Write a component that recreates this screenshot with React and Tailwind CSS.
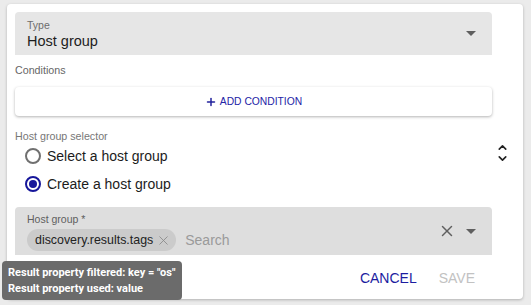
import { ChevronUp, ChevronDown, X, Plus } from 'lucide-react';

function Caret() {
  return (
    <svg width="10" height="5" viewBox="0 0 10 5" className="shrink-0">
      <path d="M0 0 L10 0 L5 5 Z" fill="#5f5f5f" />
    </svg>
  );
}

function Radio({ checked, label }) {
  return (
    <div className="flex items-center h-[28px]">
      <div className="ml-[10px] mr-[6px]">
        {checked ? (
          <div className="w-[16px] h-[16px] rounded-full border-2 border-[#16169a] flex items-center justify-center">
            <div className="w-[8px] h-[8px] rounded-full bg-[#16169a]" />
          </div>
        ) : (
          <div className="w-[16px] h-[16px] rounded-full border-2 border-[#707070]" />
        )}
      </div>
      <span className="text-[14px] text-[#1c1c1c]">{label}</span>
    </div>
  );
}

export default function App() {
  return (
    <div className="min-h-screen bg-[#ebebeb] pt-[4px] pl-[7px] pr-[8px] pb-[6px]"
      style={{ fontFamily: '"Liberation Sans", Arial, sans-serif' }}>
      <div className="relative bg-white rounded-[4px] shadow-[0_1px_3px_rgba(0,0,0,0.25)] h-[295px] px-2 pt-2">
        {/* Type select */}
        <div className="w-[477px] h-[43px] bg-[#e6e6e6] rounded-t-[4px] flex items-center pl-3 pr-[16px]">
          <div className="flex-1 pt-[1px]">
            <div className="text-[10.5px] leading-[14px] text-[#6d6d6d]">Type</div>
            <div className="text-[14.5px] leading-[19px] text-[#1d1d1d]">Host group</div>
          </div>
          <Caret />
        </div>

        <div className="mt-[9px] text-[10.7px] leading-[13px] text-[#666]">Conditions</div>

        <button className="mt-[10px] w-[477px] h-[29px] bg-white rounded-[4px] shadow-[0_1px_3px_rgba(0,0,0,0.3)] flex items-center justify-center gap-[3px] text-[10.3px] text-[#2424a6]">
          <Plus size={12} strokeWidth={3} className="text-[#22229c]" />
          ADD CONDITION
        </button>

        <div className="mt-[14px] text-[10.7px] leading-[13px] text-[#777]">Host group selector</div>

        <div className="flex justify-between items-start">
          <div className="-mt-[1px]">
            <Radio checked={false} label="Select a host group" />
            <Radio checked label="Create a host group" />
          </div>
          <div className="flex flex-col items-center mr-[6px] -mt-[2px] text-[#222]">
            <ChevronUp size={13} strokeWidth={3} className="-mb-[2px]" />
            <ChevronDown size={13} strokeWidth={3} />
          </div>
        </div>

        {/* Host group autocomplete */}
        <div className="mt-[9px] w-[477px] h-[48px] bg-[#dedede] rounded-t-[4px] flex items-center pl-3 pr-[16px]">
          <div className="flex-1">
            <div className="text-[10.5px] leading-[14px] text-[#5f5f5f] mt-[1px]">Host group *</div>
            <div className="flex items-center mt-[3px]">
              <div className="h-[22px] rounded-full bg-[#cbcbcb] flex items-center pl-[8px] pr-[5px] gap-[3px]">
                <span className="text-[12.4px] text-[#222]">discovery.results.tags</span>
                <X size={15} strokeWidth={1.4} className="text-[#8a8a8a]" />
              </div>
              <span className="ml-[9px] text-[14px] text-[#9a9a9a]">Search</span>
            </div>
          </div>
          <X size={18} strokeWidth={2} className="text-[#5f5f5f] mr-[10px]" />
          <Caret />
        </div>

        <div className="flex justify-end items-center gap-[22px] mt-[13px] mr-[40px] text-[14px]">
          <span className="text-[#1c1ca0]">CANCEL</span>
          <span className="text-[#c2c2c2]">SAVE</span>
        </div>

        {/* tooltip */}
        <div className="absolute left-[-5px] top-[257px] w-[180px] h-[39px] bg-[#6b6b6b] rounded-[4px] px-[6px] pt-[4px] text-[11px] font-bold leading-[16px] text-white whitespace-nowrap"
          style={{ fontFamily: 'Roboto, "Liberation Sans", sans-serif' }}>
          <div>Result property filtered: key = "os"</div>
          <div>Result property used: value</div>
        </div>
      </div>
    </div>
  );
}
